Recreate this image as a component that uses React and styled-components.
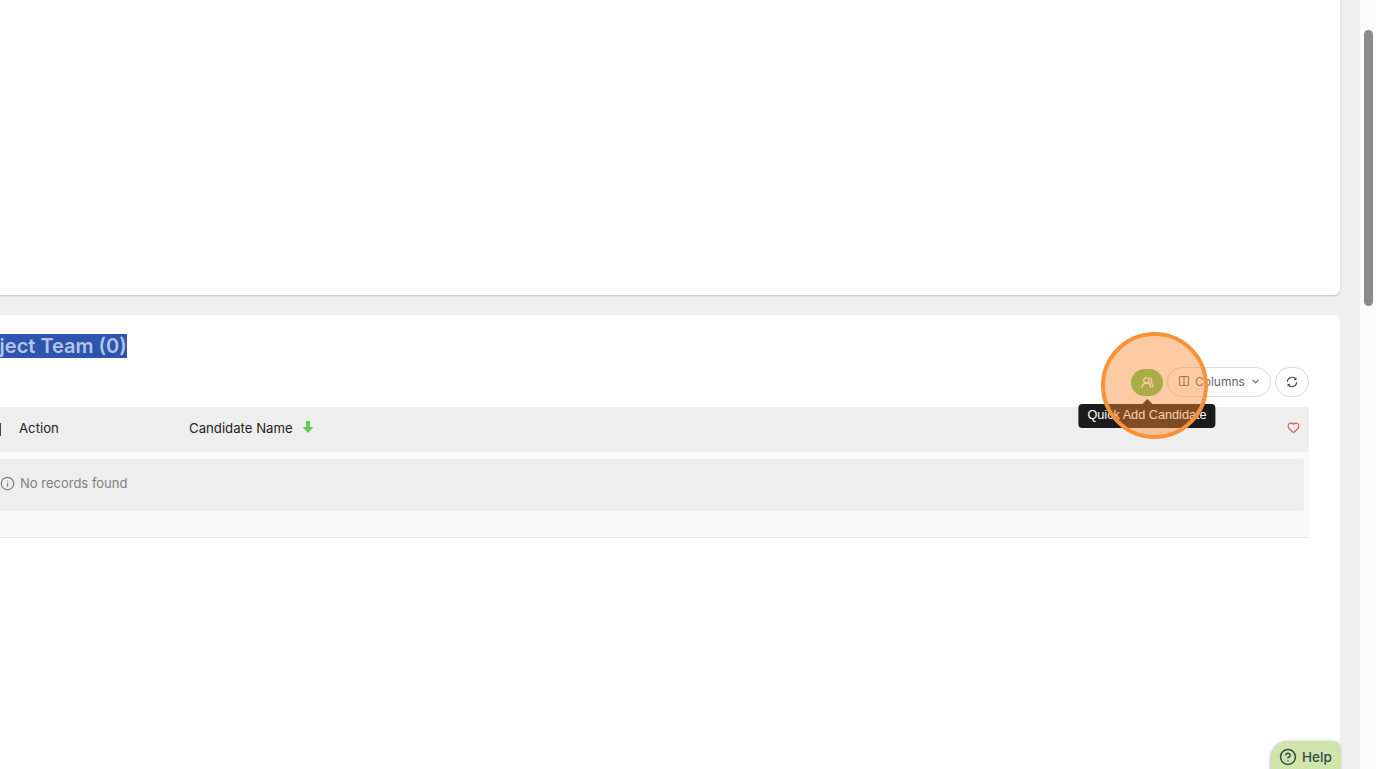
import React from "react"
import styled, { createGlobalStyle } from "styled-components"
import { UsersRound, Columns2, ChevronDown, Heart, Info, CircleHelp } from "lucide-react"

const GlobalStyle = createGlobalStyle`
    html, body {
        margin: 0;
        padding: 0;
        height: 100%;
        overflow: hidden;
        background: #eeeeee;
        font-family: Inter, "Liberation Sans", sans-serif;
    }
`

const Shell = styled.div`
    position: relative;
    display: flex;
    width: 1376px;
    height: 769px;
    overflow: hidden;
    background: #eeeeee;
`

const Main = styled.main`
    flex: 1 1 auto;
    min-width: 0;
    margin-left: -68px;
    padding-right: 20px;
    display: flex;
    flex-direction: column;
    gap: 20px;
`

const Card = styled.section`
    background: #ffffff;
    border-radius: 0 0 6px 6px;
    box-shadow: 0 1px 2px rgba(0, 0, 0, 0.2);
`

const TopCard = styled(Card)`
    height: 295px;
    flex: none;
`

const TeamCard = styled(Card)`
    flex: 1;
    border-radius: 6px 6px 0 0;
    padding: 19px 31px 0 30px;
    box-shadow: none;
`

const Title = styled.h2`
    margin: 0;
    padding-left: 5px;
    font-size: 20px;
    line-height: 24px;
    font-weight: 600;
    color: #333333;
    & > span {
        background: #2d55ad;
        color: #b3c4e6;
    }
`

const Toolbar = styled.div`
    display: flex;
    justify-content: flex-end;
    align-items: center;
    gap: 4px;
    margin-top: 9px;
    height: 30px;
`

const AddButton = styled.button`
    position: relative;
    width: 32px;
    height: 27px;
    padding: 0;
    border: 0;
    border-radius: 14px;
    background: #65c958;
    color: #ffffff;
    display: flex;
    align-items: center;
    justify-content: center;
`

const Tooltip = styled.div`
    position: absolute;
    top: 35px;
    left: 50%;
    transform: translateX(-50%);
    padding: 0 9px;
    height: 24px;
    line-height: 22px;
    background: #1b1b1b;
    color: #ffffff;
    border-radius: 4px;
    font-size: 12.7px;
    font-weight: 500;
    white-space: nowrap;
    &::before {
        content: "";
        position: absolute;
        top: -5px;
        left: 50%;
        margin-left: -5px;
        border-left: 5px solid transparent;
        border-right: 5px solid transparent;
        border-bottom: 5px solid #1b1b1b;
    }
`

const ColumnsButton = styled.button`
    height: 30px;
    width: 104px;
    padding: 0 0 2px 10px;
    box-sizing: border-box;
    border: 1px solid #d9d9d9;
    border-radius: 15px;
    background: #ffffff;
    color: #666666;
    font: 400 12px Inter, "Liberation Sans", sans-serif;
    display: flex;
    align-items: center;
    gap: 5px;
`

const RoundButton = styled.button`
    width: 34px;
    height: 30px;
    padding: 0 0 1px;
    border: 1px solid #d9d9d9;
    border-radius: 15px;
    background: #ffffff;
    color: #444444;
    display: flex;
    align-items: center;
    justify-content: center;
`

const Table = styled.div`
    margin-top: 10px;
    font-size: 13px;
`

const HeadRow = styled.div`
    display: flex;
    align-items: center;
    height: 45px;
    padding-bottom: 3px;
    box-sizing: border-box;
    background: #eeeeee;
    color: #222222;
    font-size: 13.2px;
    font-weight: 400;
`

const SelectCell = styled.div`
    width: 39px;
    height: 13px;
    box-sizing: border-box;
    border-right: 2px solid #444444;
    margin-top: 3px;
    flex: none;
`

const HeadCell = styled.div`
    width: ${props => props.$width}px;
    flex: ${props => props.$grow ? 1 : "none"};
    padding-left: ${props => props.$pad || 0}px;
    box-sizing: border-box;
    display: flex;
    align-items: center;
    gap: 9px;
`

const HeartCell = styled.div`
    width: 22px;
    flex: none;
    display: flex;
    margin-top: -1px;
    color: #d9534f;
`

const Body = styled.div`
    height: 86px;
    box-sizing: border-box;
    padding: 7px 5px 0 0;
    background: #f9f9f9;
    border-bottom: 1px solid #e6e6e6;
`

const EmptyRow = styled.div`
    height: 52px;
    padding: 0 0 4px 38px;
    box-sizing: border-box;
    background: #eeeeee;
    border-radius: 3px;
    display: flex;
    align-items: center;
    gap: 5px;
    color: #808080;
`

const Scrollbar = styled.aside`
    flex: none;
    width: 16px;
    box-sizing: border-box;
    padding: 30px 3px 0 4px;
    background: #fbfbfb;
`

const Thumb = styled.div`
    height: 276px;
    border-radius: 5px;
    background: #8a8a8a;
`

const Spotlight = styled.div`
    position: absolute;
    left: 1101px;
    top: 332px;
    width: 107px;
    height: 107px;
    box-sizing: border-box;
    border-radius: 50%;
    border: 4px solid #f79239;
    background: rgba(250, 140, 50, 0.45);
    pointer-events: none;
`

const HelpTab = styled.button`
    position: absolute;
    left: 1271px;
    top: 741px;
    width: 70px;
    height: 34px;
    padding: 0 0 2px 8px;
    border: 0;
    border-radius: 18px 8px 0 0;
    background: #cfe5ab;
    box-shadow: -1px 0 3px rgba(0, 0, 0, 0.25);
    color: #37474f;
    font: 500 13.5px Inter, "Liberation Sans", sans-serif;
    display: flex;
    align-items: center;
    gap: 5px;
`

const SortArrow = () => (
    <svg width="12" height="14" viewBox="0 0 12 14" style={{ marginTop: -2 }}>
        <path d="M4 1h4v6h3.5L6 13 .5 7H4z" fill="#65c958" />
    </svg>
)

const RefreshIcon = () => (
    <svg width="12" height="12" viewBox="0 0 12 12" fill="none" stroke="currentColor" strokeWidth="1.1" strokeLinecap="round">
        <path d="M1.4 5.4A4.6 4.6 0 0 1 9.8 3.4" />
        <path d="M10.6 6.6A4.6 4.6 0 0 1 2.2 8.6" />
        <path d="M10 1.8v1.8H8.3" strokeWidth="0.9" />
        <path d="M2 10.2V8.4h1.7" strokeWidth="0.9" />
    </svg>
)

const App = () => {
    return (
        <Shell>
            <GlobalStyle />
            <Main>
                <TopCard />
                <TeamCard>
                    <Title><span>Project Team (0)</span></Title>
                    <Toolbar>
                        <AddButton>
                            <UsersRound size={13} strokeWidth={2.6} />
                            <Tooltip>Quick Add Candidate</Tooltip>
                        </AddButton>
                        <ColumnsButton>
                            <Columns2 size={12} strokeWidth={2.2} />
                            Columns
                            <ChevronDown size={11} strokeWidth={2.4} />
                        </ColumnsButton>
                        <RoundButton>
                            <RefreshIcon />
                        </RoundButton>
                    </Toolbar>
                    <Table>
                        <HeadRow>
                            <SelectCell />
                            <HeadCell $width={188} $pad={18}>Action</HeadCell>
                            <HeadCell $grow>Candidate Name <SortArrow /></HeadCell>
                            <HeartCell><Heart size={13} /></HeartCell>
                        </HeadRow>
                        <Body>
                            <EmptyRow>
                                <Info size={15} />
                                No records found
                            </EmptyRow>
                        </Body>
                    </Table>
                </TeamCard>
            </Main>
            <Scrollbar>
                <Thumb />
            </Scrollbar>
            <Spotlight />
            <HelpTab>
                <CircleHelp size={18} />
                Help
            </HelpTab>
        </Shell>
    )
}

export default App
